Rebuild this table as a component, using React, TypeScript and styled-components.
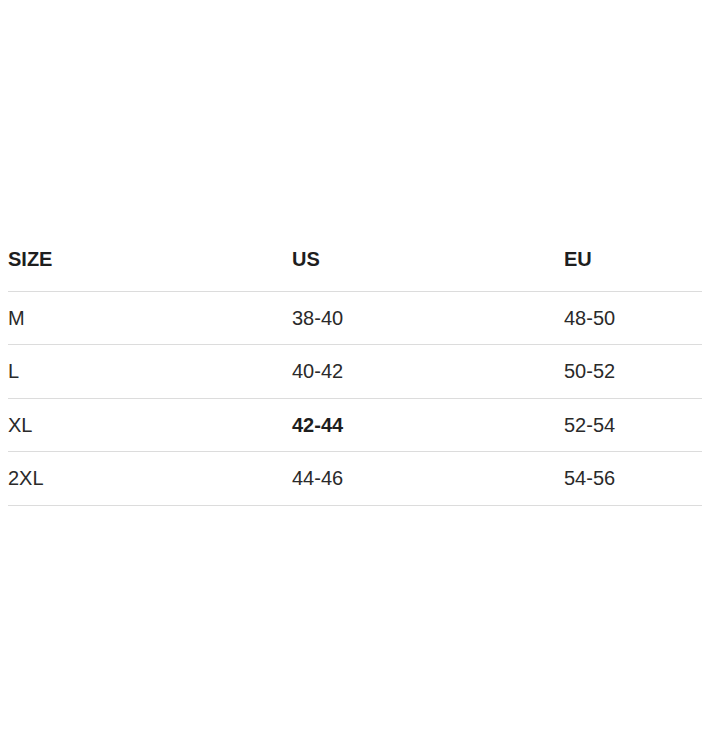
import React from "react";
import styled, { createGlobalStyle } from "styled-components";

const GlobalStyle = createGlobalStyle`
  html, body {
    margin: 0;
    padding: 0;
    background: #ffffff;
  }
  body {
    font-family: "Liberation Sans", Arial, sans-serif;
    color: #222222;
  }
`;

const Page = styled.div`
  padding: 225px 0 0 8px;
  min-height: 749px;
  box-sizing: border-box;
`;

const Table = styled.table`
  width: 694px;
  border-collapse: collapse;
  table-layout: fixed;
  font-size: 20px;
  line-height: 22.5px;
`;

const HeadCell = styled.th`
  text-align: left;
  font-weight: 700;
  padding: 23px 0 20px;
  color: #1e1e1e;
  border-bottom: 1px solid #dcdcdc;
`;

const Cell = styled.td<{ $bold?: boolean }>`
  text-align: left;
  padding: 15px 0;
  font-weight: ${(p) => (p.$bold ? 700 : 400)};
  color: ${(p) => (p.$bold ? "#1e1e1e" : "#2a2a2a")};
  border-bottom: 1px solid #dcdcdc;
`;

const rows = [
  { size: "M", us: "38-40", eu: "48-50" },
  { size: "L", us: "40-42", eu: "50-52" },
  { size: "XL", us: "42-44", eu: "52-54", highlight: true },
  { size: "2XL", us: "44-46", eu: "54-56" },
];

export default function App() {
  return (
    <>
      <GlobalStyle />
      <Page>
        <Table>
          <colgroup>
            <col style={{ width: 284 }} />
            <col style={{ width: 272 }} />
            <col style={{ width: 138 }} />
          </colgroup>
          <thead>
            <tr>
              <HeadCell>SIZE</HeadCell>
              <HeadCell>US</HeadCell>
              <HeadCell>EU</HeadCell>
            </tr>
          </thead>
          <tbody>
            {rows.map((r) => (
              <tr key={r.size}>
                <Cell>{r.size}</Cell>
                <Cell $bold={r.highlight}>{r.us}</Cell>
                <Cell>{r.eu}</Cell>
              </tr>
            ))}
          </tbody>
        </Table>
      </Page>
    </>
  );
}
